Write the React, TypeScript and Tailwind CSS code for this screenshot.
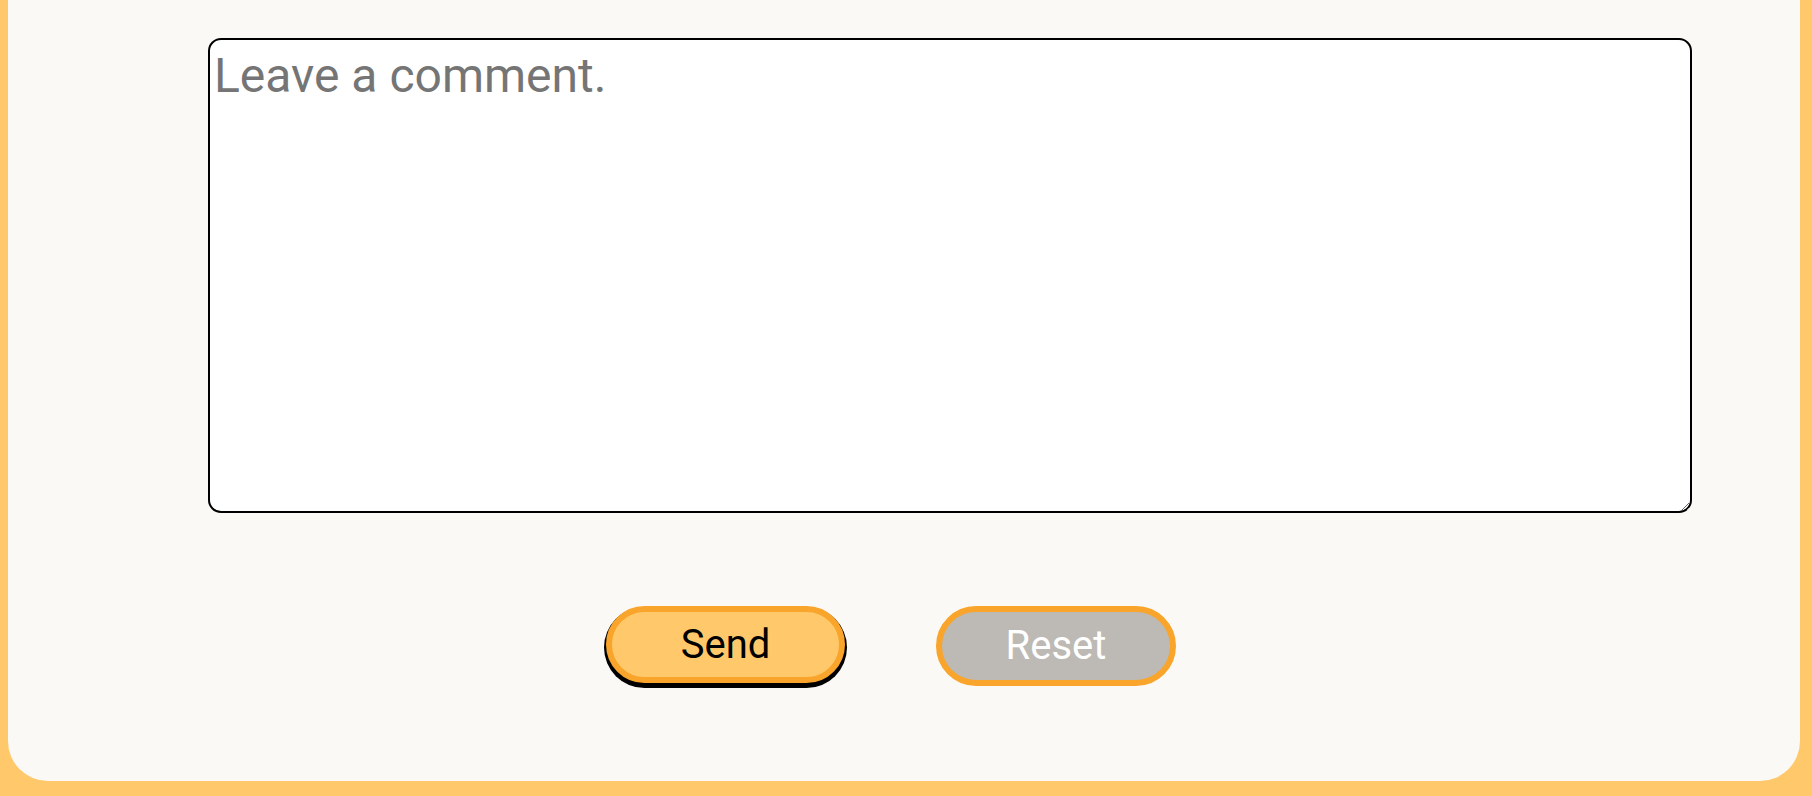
export default function App() {
  return (
    <div className="h-screen overflow-hidden bg-[#FFC96B] pl-2 pr-3 pb-[15px] font-['Roboto',sans-serif]">
      <div className="h-full bg-[#FAF9F5] rounded-b-[40px] pt-[38px]">
        <textarea
          placeholder="Leave a comment."
          className="block ml-[200px] w-[1484px] h-[475px] bg-white border-2 border-black rounded-[13px] px-[4px] pt-[8px] text-[48px] leading-[1.17] text-black placeholder:text-[#757575] outline-none"
        />
        <div className="flex items-start gap-[91px] ml-[598px] mt-[93px]">
          <button className="w-[239px] h-[77px] rounded-full bg-[#FFC96B] border-[6px] border-[#F9A42A] shadow-[0_3px_0_2px_#000] text-[40px] text-black leading-none">
            Send
          </button>
          <button className="w-[240px] h-[80px] rounded-full bg-[#BDB9B5] border-[6px] border-[#F9A42A] text-[40px] text-white leading-none">
            Reset
          </button>
        </div>
      </div>
    </div>
  );
}
